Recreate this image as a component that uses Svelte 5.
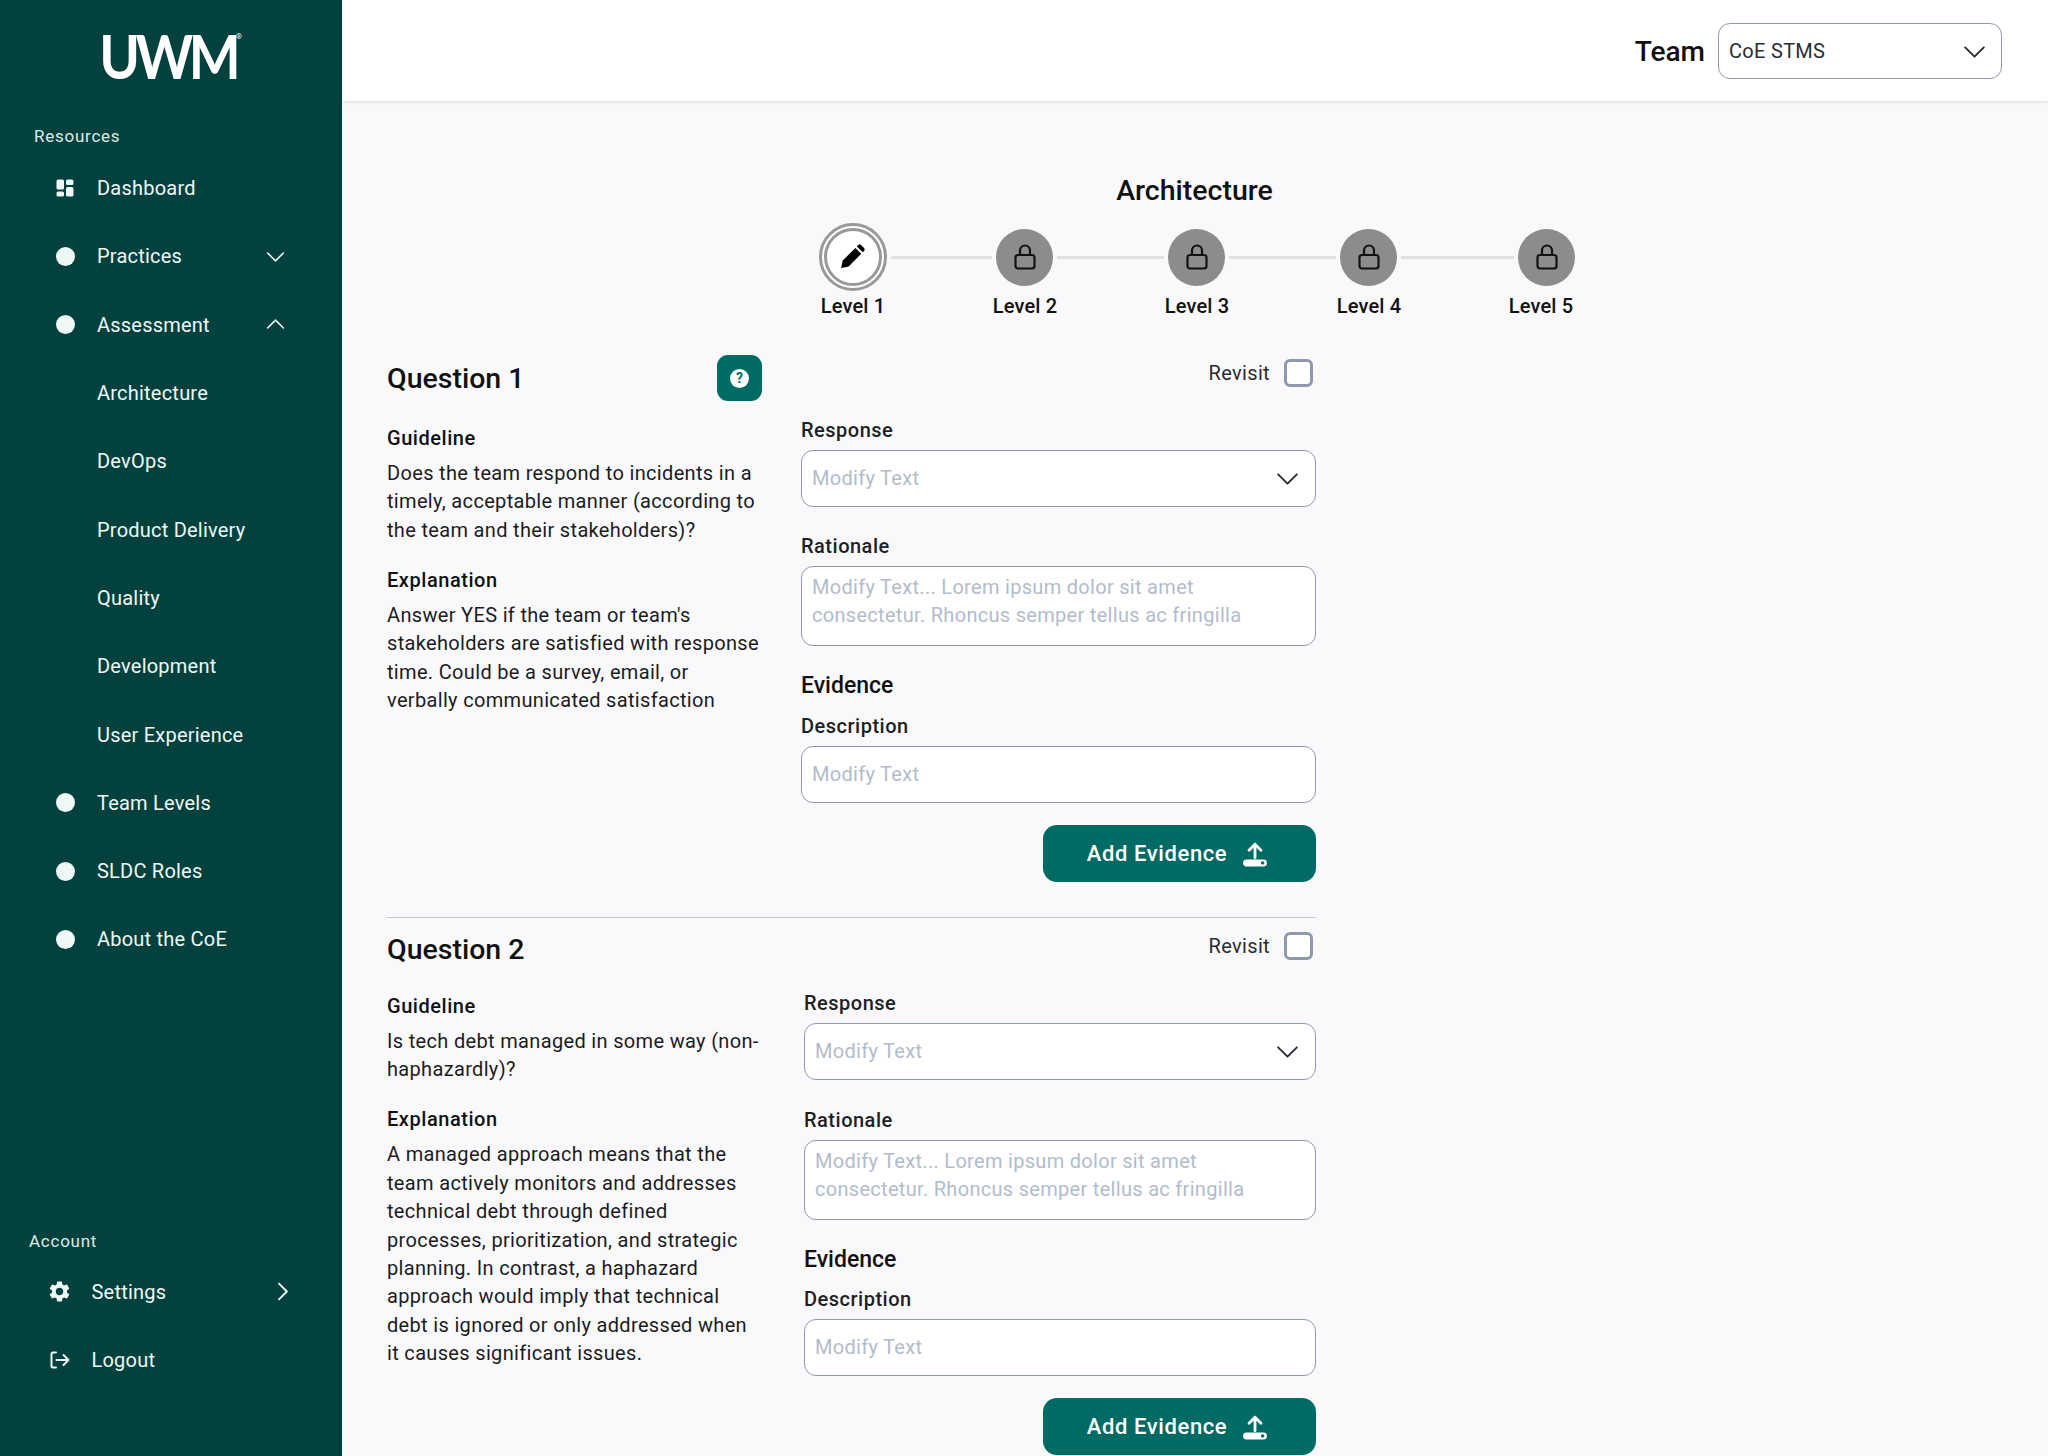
<script>
  const navItems = [
    { label: 'Dashboard', icon: 'grid' },
    { label: 'Practices', icon: 'dot', chevron: 'down' },
    { label: 'Assessment', icon: 'dot', chevron: 'up' },
    { label: 'Architecture' },
    { label: 'DevOps' },
    { label: 'Product Delivery' },
    { label: 'Quality' },
    { label: 'Development' },
    { label: 'User Experience' },
    { label: 'Team Levels', icon: 'dot' },
    { label: 'SLDC Roles', icon: 'dot' },
    { label: 'About the CoE', icon: 'dot' }
  ];

  const levels = ['Level 1', 'Level 2', 'Level 3', 'Level 4', 'Level 5'];
  const lineWidths = [101, 107, 107, 113];

  const questions = [
    {
      title: 'Question 1',
      help: true,
      guideline: 'Does the team respond to incidents in a timely, acceptable manner (according to the team and their stakeholders)?',
      explanation: "Answer YES if the team or team's stakeholders are satisfied with response time. Could be a survey, email, or verbally communicated satisfaction"
    },
    {
      title: 'Question 2',
      help: false,
      guideline: 'Is tech debt managed in some way (non-haphazardly)?',
      explanation: 'A managed approach means that the team actively monitors and addresses technical debt through defined processes, prioritization, and strategic planning. In contrast, a haphazard approach would imply that technical debt is ignored or only addressed when it causes significant issues.'
    }
  ];
</script>

{#snippet chevron(dir, size = 24)}
  <svg class="chev {dir}" width={size} height={size} viewBox="0 0 24 24" fill="none" stroke="currentColor" stroke-width="1.8" stroke-linecap="round" stroke-linejoin="round">
    <path d="M3 8l9 9 9-9" />
  </svg>
{/snippet}

{#snippet navRow(item)}
  <div class="nav-row">
    <span class="nav-icon">
      {#if item.icon === 'dot'}
        <span class="dot"></span>
      {:else if item.icon === 'grid'}
        <svg width="18" height="18" viewBox="0 0 18 18" fill="currentColor">
          <rect x="0.5" y="0.5" width="7.5" height="10" rx="1.6" />
          <rect x="10" y="0.5" width="7.5" height="5.5" rx="1.6" />
          <rect x="0.5" y="12.5" width="7.5" height="5" rx="1.6" />
          <rect x="10" y="8" width="7.5" height="9.5" rx="1.6" />
        </svg>
      {:else if item.icon === 'gear'}
        <svg width="25" height="25" viewBox="0 0 24 24" fill="currentColor">
          <path d="M19.14 12.94c.04-.3.06-.61.06-.94 0-.32-.02-.64-.07-.94l2.03-1.58c.18-.14.23-.41.12-.61l-1.92-3.32c-.12-.22-.37-.29-.59-.22l-2.39.96c-.5-.38-1.03-.7-1.62-.94l-.36-2.54c-.04-.24-.24-.41-.48-.41h-3.84c-.24 0-.43.17-.47.41l-.36 2.54c-.59.24-1.13.57-1.62.94l-2.39-.96c-.22-.08-.47 0-.59.22L2.74 8.87c-.12.21-.08.47.12.61l2.03 1.58c-.05.3-.09.63-.09.94s.02.64.07.94l-2.03 1.58c-.18.14-.23.41-.12.61l1.92 3.32c.12.22.37.29.59.22l2.39-.96c.5.38 1.03.7 1.62.94l.36 2.54c.05.24.24.41.48.41h3.84c.24 0 .44-.17.47-.41l.36-2.54c.59-.24 1.13-.56 1.62-.94l2.39.96c.22.08.47 0 .59-.22l1.92-3.32c.12-.22.07-.47-.12-.61l-2.01-1.58zM12 15.6c-1.98 0-3.6-1.62-3.6-3.6s1.62-3.6 3.6-3.6 3.6 1.62 3.6 3.6-1.62 3.6-3.6 3.6z" />
        </svg>
      {:else if item.icon === 'logout'}
        <svg width="20" height="18" viewBox="0 0 20 18" fill="none" stroke="currentColor" stroke-width="2" stroke-linecap="round" stroke-linejoin="round">
          <path d="M6 1.5H3a1.5 1.5 0 0 0-1.5 1.5v12A1.5 1.5 0 0 0 3 16.5h3" />
          <path d="M6.5 9H18.5M13.5 4l5 5-5 5" />
        </svg>
      {/if}
    </span>
    <span class="nav-label">{item.label}</span>
    {#if item.chevron}
      <span class="nav-chev">{@render chevron(item.chevron, 21)}</span>
    {/if}
  </div>
{/snippet}

{#snippet question(q, index)}
  <section class="question" class:second={index === 1}>
    <div class="q-left">
      <div class="q-head">
        <h2>{q.title}</h2>
        {#if q.help}
          <button class="help" type="button"><span>?</span></button>
        {/if}
      </div>
      <h3 class="guide">Guideline</h3>
      <p>{q.guideline}</p>
      <h3 class="expl">Explanation</h3>
      <p>{q.explanation}</p>
    </div>
    <div class="q-right">
      <div class="revisit">
        <span>Revisit</span>
        <span class="check"></span>
      </div>
      <div class="field-label response">Response</div>
      <div class="select input-box">
        <span class="placeholder">Modify Text</span>
        <span class="select-chev">{@render chevron('down', 25)}</span>
      </div>
      <div class="field-label rationale">Rationale</div>
      <textarea class="input-box" rows="2" placeholder="Modify Text... Lorem ipsum dolor sit amet consectetur. Rhoncus semper tellus ac fringilla"></textarea>
      <div class="evidence">Evidence</div>
      <div class="field-label desc">Description</div>
      <input class="input-box" type="text" placeholder="Modify Text" />
      <div class="btn-row">
        <button class="add" type="button">
          Add Evidence
          <svg width="26" height="26" viewBox="0 0 24 24" fill="none">
            <path d="M12 15.5V3M6.5 8.5L12 3l5.5 5.5" stroke="#fff" stroke-width="2.6" stroke-linecap="round" stroke-linejoin="round" />
            <rect x="1" y="17" width="22" height="6.5" rx="3.2" fill="#fff" />
            <circle cx="19" cy="20.2" r="1.6" fill="#006b64" />
          </svg>
        </button>
      </div>
    </div>
  </section>
{/snippet}

<div class="page">
  <aside class="sidebar">
    <div class="logo"><span class="logo-text">UWM</span><span class="reg">®</span></div>
    <div class="res-label">Resources</div>
    <nav>
      {#each navItems as item}
        {@render navRow(item)}
      {/each}
    </nav>
    <div class="account">
      <div class="acc-label">Account</div>
      <div class="acc-rows">
        <div class="settings-row">
          {@render navRow({ label: 'Settings', icon: 'gear' })}
          <svg class="settings-chev" width="21" height="21" viewBox="0 0 24 24" fill="none" stroke="currentColor" stroke-width="2.2" stroke-linecap="round" stroke-linejoin="round"><path d="M8 3l9 9-9 9" /></svg>
        </div>
        {@render navRow({ label: 'Logout', icon: 'logout' })}
      </div>
    </div>
  </aside>

  <div class="content">
    <header>
      <span class="team">Team</span>
      <div class="team-select">
        <span>CoE STMS</span>
        {@render chevron('down', 25)}
      </div>
    </header>

    <main>
      <h1>Architecture</h1>
      <div class="stepper">
        {#each levels as level, i}
          {#if i === 0}
            <div class="step current">
              <svg width="30" height="30" viewBox="0 0 24 24" fill="#000">
                <path d="M2.5 20.8l1.3-6L13.9 4.7l4.7 4.7L8.5 19.5z" />
                <path d="M15.1 3.5l1-1a1.8 1.8 0 0 1 2.5 0l2.2 2.2a1.8 1.8 0 0 1 0 2.5l-1 1z" />
              </svg>
            </div>
          {:else}
            <div class="line" style="width: {lineWidths[i - 1]}px"></div>
            <div class="step">
              <svg width="24" height="28" viewBox="0 0 24 28" fill="none" stroke="#111" stroke-width="2.2" stroke-linejoin="round">
                <rect x="2.5" y="12" width="19" height="13.5" rx="2.5" />
                <path d="M7 12V7.5a5 5 0 0 1 10 0V12" />
              </svg>
            </div>
          {/if}
        {/each}
      </div>
      <div class="step-labels">
        {#each levels as level}
          <span>{level}</span>
        {/each}
      </div>

      {#each questions as q, i}
        {#if i > 0}
          <hr />
        {/if}
        {@render question(q, i)}
      {/each}
    </main>
  </div>
</div>

<style>
  :global(body) {
    margin: 0;
    background: #f9f9fb;
  }

  .page {
    display: flex;
    width: 2048px;
    height: 1456px;
    overflow: hidden;
    font-family: Roboto, "Liberation Sans", sans-serif;
    color: #111;
  }

  /* Sidebar */
  .sidebar {
    width: 341.5px;
    flex: none;
    display: flex;
    flex-direction: column;
    background: #03413e;
    color: #eef8f6;
    box-sizing: border-box;
    padding-bottom: 62px;
  }

  .logo {
    display: flex;
    justify-content: center;
    height: 96px;
    padding: 20px 16px 0 0;
    box-sizing: border-box;
  }

  .logo-text {
    font-family: Lato, sans-serif;
    font-weight: 700;
    font-size: 61px;
    line-height: 72px;
    color: #fff;
    letter-spacing: -5px;
    transform: scaleX(0.9);
    transform-origin: right center;
  }

  .reg {
    font-size: 8px;
    line-height: 12px;
    margin-top: 11px;
  }

  .res-label,
  .acc-label {
    font-size: 17px;
    line-height: 24px;
    letter-spacing: 0.75px;
    color: #dcebe8;
  }

  .res-label {
    margin: 28px 0 0 34px;
  }

  nav {
    display: flex;
    flex-direction: column;
    margin-top: 6px;
    padding-left: 55px;
  }

  .nav-row {
    display: flex;
    align-items: center;
    height: 68.3px;
    font-size: 20px;
    font-weight: 450;
    letter-spacing: 0.22px;
    position: relative;
  }

  .nav-icon {
    width: 20px;
    display: flex;
    justify-content: center;
    margin-right: 22px;
    flex: none;
  }

  .nav-icon svg {
    flex: none;
  }

  .dot {
    width: 19px;
    height: 19px;
    border-radius: 50%;
    background: #eef8f6;
  }

  .nav-chev {
    display: flex;
    margin-left: auto;
    margin-right: 55.5px;
  }

  .chev.up {
    transform: rotate(180deg);
  }

  .account {
    margin-top: auto;
    padding-left: 29px;
  }

  .acc-rows {
    padding-left: 20.5px;
    margin-top: 4px;
  }

  .settings-row {
    display: flex;
    align-items: center;
    justify-content: space-between;
    padding-right: 49px;
  }

  .settings-chev {
    flex: none;
  }

  /* Header */
  .content {
    flex: 1;
    min-width: 0;
    display: flex;
    flex-direction: column;
  }

  header {
    height: 101px;
    flex: none;
    box-sizing: border-box;
    display: flex;
    align-items: center;
    justify-content: flex-end;
    gap: 13px;
    padding: 1px 46px 0 0;
    background: #fff;
    box-shadow: 0 1px 3px rgba(0, 0, 0, 0.12);
    position: relative;
  }

  .team {
    padding-top: 1px;
    font-size: 28px;
    font-weight: 500;
  }

  .team-select {
    width: 284px;
    height: 56px;
    box-sizing: border-box;
    display: flex;
    align-items: center;
    justify-content: space-between;
    padding: 0 14px 0 10px;
    border: 1.5px solid #8e99ae;
    border-radius: 12px;
    font-size: 20px;
    letter-spacing: 0.3px;
    color: #2a2c33;
  }

  /* Main */
  main {
    padding: 72px 0 0 45.5px;
  }

  h1 {
    margin: 0 46px 0 0;
    text-align: center;
    font-size: 28.5px;
    line-height: 36px;
    font-weight: 500;
  }

  .stepper {
    display: flex;
    align-items: center;
    gap: 4px;
    width: 757px;
    height: 68px;
    margin: 14px 0 0 432px;
  }

  .step {
    width: 57px;
    height: 57px;
    flex: none;
    border-radius: 50%;
    background: #8c8c8c;
    display: flex;
    align-items: center;
    justify-content: center;
    box-sizing: border-box;
  }

  .step.current {
    width: 68px;
    height: 68px;
    background: #fff;
    border: 3.5px solid #999;
    outline: 3px solid #999;
    outline-offset: -8px;
  }

  .line {
    flex: none;
    height: 3px;
    background: #e0e0e0;
  }

  .step-labels {
    display: grid;
    grid-template-columns: repeat(5, 172px);
    justify-content: start;
    margin: 3px 0 0 380px;
    text-align: center;
    font-size: 20px;
    line-height: 24px;
    font-weight: 500;
    letter-spacing: 0.15px;
  }

  .question {
    display: flex;
    width: 929px;
    margin-top: 37px;
  }

  .question.second {
    margin-top: 8px;
  }

  .q-left {
    width: 375px;
    flex: none;
    margin-right: 39px;
  }

  .second .q-left {
    width: 378px;
    margin-right: 39px;
  }

  .q-head {
    height: 46px;
    display: flex;
    align-items: center;
    justify-content: space-between;
  }

  h2 {
    margin: 0;
    padding-top: 2px;
    font-size: 28.5px;
    line-height: 36px;
    font-weight: 500;
  }

  .help {
    width: 45px;
    height: 46px;
    padding: 0;
    border: none;
    border-radius: 11px;
    background: #006b64;
    display: flex;
    align-items: center;
    justify-content: center;
  }

  .help span {
    width: 19px;
    height: 19px;
    border-radius: 50%;
    background: #fff;
    color: #006b64;
    font: 700 14px/19px Roboto, sans-serif;
    text-align: center;
  }

  h3 {
    margin: 0;
    font-size: 20px;
    line-height: 28px;
    font-weight: 500;
    letter-spacing: 0.55px;
  }

  .guide {
    margin-top: 23px;
  }

  .second .guide {
    margin-top: 20px;
  }

  .expl {
    margin-top: 21.5px;
  }

  p {
    max-width: 375px;
    margin: 7px 0 0;
    font-size: 20px;
    line-height: 28.4px;
    letter-spacing: 0.33px;
    color: #1c1c1f;
  }

  .q-right {
    flex: 1;
    min-width: 0;
    display: flex;
    flex-direction: column;
  }

  .revisit {
    display: flex;
    justify-content: flex-end;
    align-items: center;
    gap: 14px;
    height: 28px;
    margin-top: 4px;
    padding-right: 3px;
    font-size: 20px;
    letter-spacing: 0.35px;
    color: #2a2c33;
  }

  .second .revisit {
    margin-top: 6px;
  }

  .check {
    width: 29px;
    height: 28px;
    box-sizing: border-box;
    border: 3px solid #8e99ae;
    border-radius: 6px;
    background: #fff;
  }

  .field-label {
    font-size: 20px;
    line-height: 24px;
    font-weight: 500;
    letter-spacing: 0.5px;
    color: #1d1f24;
  }

  .response {
    margin-top: 31px;
    margin-bottom: 8px;
  }

  .rationale {
    margin-top: 27px;
    margin-bottom: 8px;
  }

  .second .rationale {
    margin-top: 28px;
  }

  .desc {
    margin-top: 14px;
    margin-bottom: 8.5px;
  }

  .second .desc {
    margin-top: 13px;
  }

  .evidence {
    margin-top: 25.5px;
    font-size: 23px;
    line-height: 28px;
    font-weight: 500;
  }

  .input-box {
    width: 100%;
    box-sizing: border-box;
    margin: 0;
    background: #fff;
    border: 1.5px solid #8e99ae;
    border-radius: 12px;
    font-family: Roboto, sans-serif;
    font-size: 20px;
    letter-spacing: 0.3px;
    color: #2a2c33;
    outline: none;
  }

  .input-box::placeholder,
  .placeholder {
    color: #b3bccb;
    opacity: 1;
  }

  .select,
  input.input-box {
    height: 57px;
    padding: 0 10px 1px;
  }

  .select {
    display: flex;
    align-items: center;
    justify-content: space-between;
    padding-right: 15px;
  }

  .select-chev {
    display: flex;
    color: #2a2c33;
  }

  textarea.input-box {
    display: block;
    height: 80px;
    padding: 6px 60px 0 10px;
    line-height: 28.4px;
    resize: none;
    overflow: hidden;
  }

  .btn-row {
    display: flex;
    justify-content: flex-end;
    margin-top: 22px;
  }

  .add {
    width: 273px;
    height: 57px;
    border: none;
    border-radius: 14px;
    background: #006b64;
    color: #fff;
    font: 500 22px Roboto, sans-serif;
    letter-spacing: 0.6px;
    display: flex;
    align-items: center;
    justify-content: center;
    gap: 15px;
    padding: 0 4px 0 0;
  }

  hr {
    width: 929px;
    height: 1px;
    margin: 35px 0 0;
    border: none;
    background: #c3c9d4;
  }
</style>
